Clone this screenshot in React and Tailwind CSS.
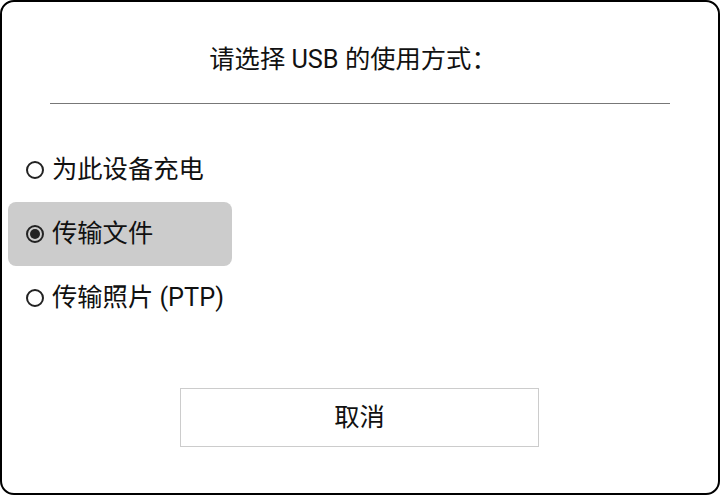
import { useState } from "react";

const options = [
  { id: "charge", label: "为此设备充电" },
  { id: "mtp", label: "传输文件" },
  { id: "ptp", label: "传输照片 (PTP)" },
];

function Radio({ checked }) {
  return (
    <span className="flex h-[18px] w-[18px] shrink-0 items-center justify-center rounded-full border-2 border-[#222]">
      {checked && <span className="h-[10px] w-[10px] rounded-full bg-[#222]" />}
    </span>
  );
}

export default function App() {
  const [mode, setMode] = useState("mtp");

  return (
    <div
      className="h-[496px] w-[720px] bg-white"
      style={{ fontFamily: 'Roboto, "Noto Sans CJK SC", sans-serif' }}
    >
      <div className="flex h-[495px] w-[720px] flex-col rounded-[14px] border-2 border-black text-[#111]">
        <h1 className="pt-[34px] pr-[14px] text-center text-[25.3px] leading-[48px]">
          请选择 USB 的使用方式：
        </h1>
        <div className="mx-[48px] mt-[19px] h-px bg-[#777]" />

        <div className="mt-[34px] flex flex-col gap-0 pl-[6px]">
          {options.map((o) => (
            <button
              key={o.id}
              onClick={() => setMode(o.id)}
              className={`flex h-[64px] w-[224px] items-center gap-[8px] rounded-[8px] pl-[18px] text-left text-[25.3px] ${
                mode === o.id ? "bg-[#cccccc]" : ""
              }`}
            >
              <Radio checked={mode === o.id} />
              <span className="whitespace-nowrap">{o.label}</span>
            </button>
          ))}
        </div>

        <div className="mt-[58px] flex pl-[178px]">
          <button className="h-[59px] w-[359px] border border-[#cccccc] text-[25.3px]">
            取消
          </button>
        </div>
      </div>
    </div>
  );
}
